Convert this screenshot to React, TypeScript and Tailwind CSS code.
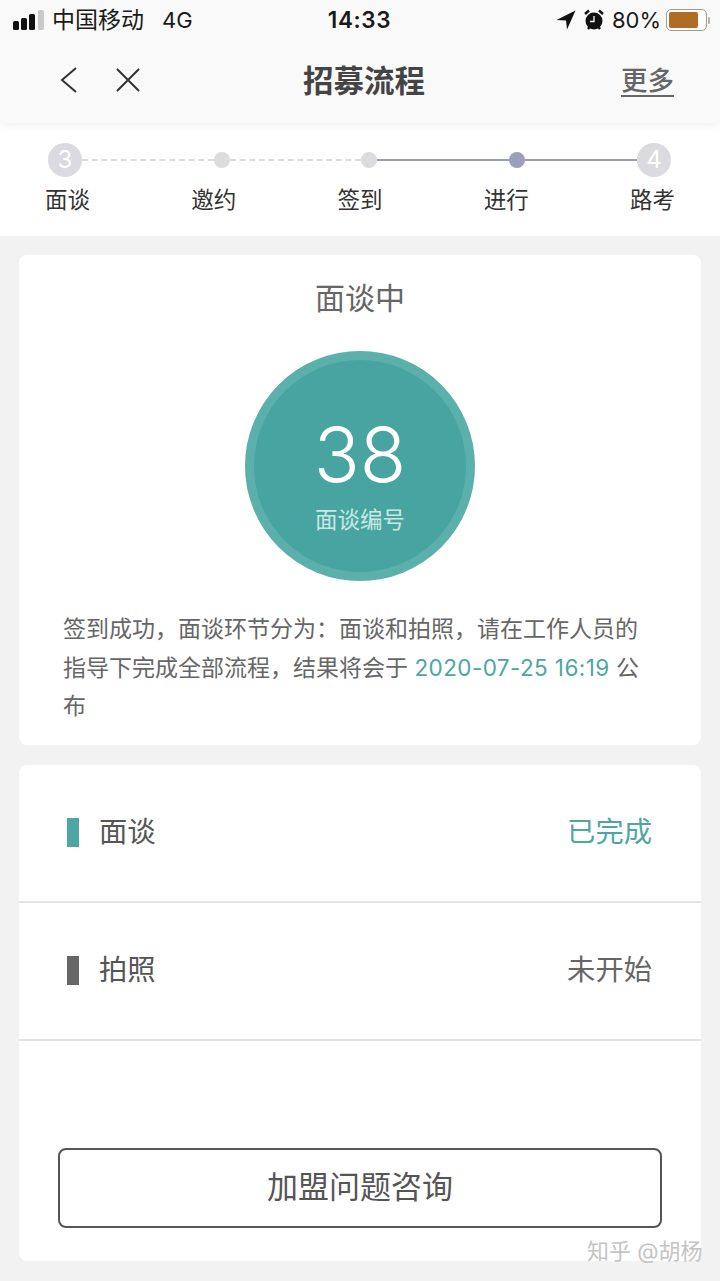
import React from "react";

const cjk = "font-['Inter','Noto_Sans_CJK_SC',sans-serif]";

function StatusBar() {
  return (
    <div className="flex h-[40px] items-center justify-between pl-[12px] pr-[10px] text-[22px] leading-none text-[#1a1a1a]">
      <div className="flex w-[260px] items-center">
        <svg width="33" height="21" viewBox="0 0 33 21" className="mr-[8px]">
          <rect x="1" y="11" width="6" height="9" rx="1.5" fill="#111" />
          <rect x="9" y="8" width="6" height="12" rx="1.5" fill="#111" />
          <rect x="17" y="4" width="6" height="16" rx="1.5" fill="#111" />
          <rect x="26" y="0" width="6" height="20" rx="1.5" fill="#c9c9c9" />
        </svg>
        <span className="-ml-[1px] text-[23px]">中国移动</span>
        <span className="ml-[18px] text-[22px]">4G</span>
      </div>
      <span className="-ml-[3px] text-[22.5px] font-semibold tracking-[0.6px]">14:33</span>
      <div className="flex w-[260px] items-center justify-end">
        <svg width="20" height="20" viewBox="0 0 20 20" className="mr-[8px]">
          <path d="M19.5 0.5 L0.5 10 L10 10.5 L11 19.5 Z" fill="#111" />
        </svg>
        <svg width="20" height="22" viewBox="0 0 20 22" className="mr-[8px]">
          <circle cx="10" cy="12" r="8.5" fill="#111" />
          <path d="M1 5 L5 1.5 M19 5 L15 1.5 M4 20 L5.5 18 M16 20 L14.5 18" stroke="#111" strokeWidth="2.4" />
          <path d="M10 7 V12.5 H6" stroke="#fff" strokeWidth="1.3" fill="none" />
        </svg>
        <span className="mr-[5px] text-[22px]">80%</span>
        <div className="flex h-[22px] w-[41px] items-center rounded-[5px] border border-[#a39a8c] bg-white p-[2px]">
          <div className="h-full w-[29px] rounded-[2px] bg-[#b06c22]" />
        </div>
        <div className="ml-[1px] h-[7px] w-[2px] rounded-r-[1px] bg-[#b5b5b5]" />
      </div>
    </div>
  );
}

function NavBar() {
  return (
    <div className="relative flex h-[83px] items-center">
      <div className="flex items-center pl-[60px] pb-[4px]">
        <svg width="18" height="28" viewBox="0 0 18 28" fill="none" stroke="#333" strokeWidth="2">
          <path d="M16 2 L2 14 L16 26" />
        </svg>
        <svg width="26" height="26" viewBox="0 0 26 26" fill="none" stroke="#333" strokeWidth="2" className="ml-[37px]">
          <path d="M2 2 L24 24 M24 2 L2 24" />
        </svg>
      </div>
      <div className="flex-1 pr-[34px] text-center text-[30.5px] font-semibold leading-none text-[#444]">招募流程</div>
      <span className="mr-[46px] border-b-2 border-[#666] text-[26.5px] font-medium leading-[29px] text-[#666]">更多</span>
    </div>
  );
}

function Steps() {
  const big = "flex h-[34px] w-[34px] shrink-0 items-center justify-center rounded-full bg-[#dadae0] text-[24px] leading-none text-white";
  const dot = "h-[16px] w-[16px] shrink-0 rounded-full";
  return (
    <div className="h-[113px] bg-white">
      <div className="flex items-center pl-[48px] pt-[20px]">
        <div className={big}>3</div>
        <div className="w-[132px] border-t-2 border-dashed border-[#dcdcdc]" />
        <div className={`${dot} bg-[#dcdcdc]`} />
        <div className="w-[131px] border-t-2 border-dashed border-[#dcdcdc]" />
        <div className={`${dot} bg-[#dcdcdc]`} />
        <div className="h-[2px] w-[132px] bg-[#9a9db2]" />
        <div className={`${dot} bg-[#9aa0bb]`} />
        <div className="h-[2px] w-[112px] bg-[#9a9db2]" />
        <div className={big}>4</div>
      </div>
      <div className="mt-[7px] flex justify-between px-[45px] text-[22.5px] leading-[32px] text-[#333]">
        <span>面谈</span>
        <span>邀约</span>
        <span>签到</span>
        <span>进行</span>
        <span>路考</span>
      </div>
    </div>
  );
}

function Row({ bar, title, status, statusClass }: { bar: string; title: string; status: string; statusClass: string }) {
  return (
    <div className="flex h-[138px] items-center justify-between border-b-2 border-[#e2e2e4] pb-[1px] pl-[48px] pr-[49px]">
      <div className="flex items-center">
        <div className={`h-[29px] w-[12px] ${bar}`} />
        <span className="ml-[20px] text-[28.3px] leading-none text-[#555]">{title}</span>
      </div>
      <span className={`text-[28.3px] leading-none ${statusClass}`}>{status}</span>
    </div>
  );
}

export default function App() {
  return (
    <div className={`relative h-[1281px] w-[720px] overflow-hidden bg-[#f2f2f2] ${cjk}`}>
      <div className="relative z-10 bg-[#f9f9f9] shadow-[0_2px_8px_rgba(0,0,0,0.07)]">
        <StatusBar />
        <NavBar />
      </div>
      <Steps />
      <div className="mx-[19px] mt-[19px] h-[490px] rounded-[8px] bg-white pt-[23px]">
        <div className="text-center text-[30px] leading-[40px] text-[#666]">面谈中</div>
        <div className="mx-auto mt-[33px] flex h-[230px] w-[230px] flex-col items-center rounded-full border-[9px] border-[#5bb0ab] bg-[#48a4a0] text-white">
          <div className="mt-[56px] text-[76px] font-[350] leading-[76px]">38</div>
          <div className="mt-[13px] text-[22.5px] leading-[30px] text-[#c8e8e5]">面谈编号</div>
        </div>
        <div className="mx-[44px] mt-[29px] text-[23px] leading-[38.5px] text-[#666]">
          签到成功，面谈环节分为：面谈和拍照，请在工作人员的指导下完成全部流程，结果将会于 <span className="text-[22.5px] tracking-[0.4px] text-[#4da6a2]">2020-07-25 16:19</span> 公布
        </div>
      </div>
      <div className="mx-[19px] mt-[20px] h-[496px] rounded-[8px] bg-white">
        <Row bar="bg-[#4da6a2]" title="面谈" status="已完成" statusClass="text-[#4da6a2]" />
        <Row bar="bg-[#666666]" title="拍照" status="未开始" statusClass="text-[#666]" />
        <div className="mx-[39px] mt-[107px] flex h-[80px] items-center justify-center rounded-[8px] border-2 border-[#555] pb-[3px] text-[31px] leading-none text-[#555]">
          加盟问题咨询
        </div>
      </div>
      <div className="absolute left-[587px] top-[1237px] text-[22px] leading-[28px] text-[#c4c4c4]">知乎 @胡杨</div>
    </div>
  );
}
